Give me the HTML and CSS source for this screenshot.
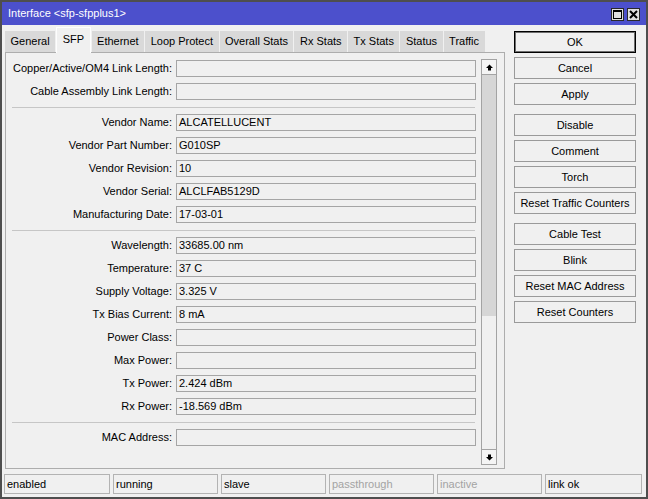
FILE: index.html
```html
<!DOCTYPE html>
<html>
<head>
<meta charset="utf-8">
<link rel="stylesheet" href="styles.css">
</head>
<body>
<div class="window">
  <div class="titlebar">
    <span class="title">Interface &lt;sfp-sfpplus1&gt;</span>
    <div class="tb-btns">
      <span class="tb-btn"><svg width="11" height="11" viewBox="0 0 11 11"><rect x="1.5" y="1.5" width="8" height="8" fill="none" stroke="#000" stroke-width="1"/><rect x="1" y="1" width="9" height="2" fill="#000"/></svg></span>
      <span class="tb-btn"><svg width="11" height="11" viewBox="0 0 11 11"><path d="M2 2 L9 9 M9 2 L2 9" stroke="#000" stroke-width="2" fill="none"/></svg></span>
    </div>
  </div>
  <div class="main">
    <div class="left">
      <div class="tabs">
        <span class="tab">General</span>
        <span class="tab active">SFP</span>
        <span class="tab">Ethernet</span>
        <span class="tab">Loop Protect</span>
        <span class="tab">Overall Stats</span>
        <span class="tab">Rx Stats</span>
        <span class="tab">Tx Stats</span>
        <span class="tab">Status</span>
        <span class="tab">Traffic</span>
      </div>
      <div class="panel">
        <div class="form">
          <span class="label">Copper/Active/OM4 Link Length:</span><span class="field"></span>
          <span class="label">Cable Assembly Link Length:</span><span class="field"></span>
          <span class="sep"></span>
          <span class="label">Vendor Name:</span><span class="field">ALCATELLUCENT</span>
          <span class="label">Vendor Part Number:</span><span class="field">G010SP</span>
          <span class="label">Vendor Revision:</span><span class="field">10</span>
          <span class="label">Vendor Serial:</span><span class="field">ALCLFAB5129D</span>
          <span class="label">Manufacturing Date:</span><span class="field">17-03-01</span>
          <span class="sep"></span>
          <span class="label">Wavelength:</span><span class="field">33685.00 nm</span>
          <span class="label">Temperature:</span><span class="field">37 C</span>
          <span class="label">Supply Voltage:</span><span class="field">3.325 V</span>
          <span class="label">Tx Bias Current:</span><span class="field">8 mA</span>
          <span class="label">Power Class:</span><span class="field"></span>
          <span class="label">Max Power:</span><span class="field"></span>
          <span class="label">Tx Power:</span><span class="field">2.424 dBm</span>
          <span class="label">Rx Power:</span><span class="field">-18.569 dBm</span>
          <span class="sep"></span>
          <span class="label">MAC Address:</span><span class="field"></span>
        </div>
        <div class="scroll">
          <span class="sb-btn"><svg width="7" height="7" viewBox="0 0 7 7"><path d="M0 4 L3.5 0.5 L7 4 Z M2 4 H5 V6.5 H2 Z" fill="#000"/></svg></span>
          <div class="sb-track"><div class="sb-thumb"></div></div>
          <span class="sb-btn"><svg width="7" height="7" viewBox="0 0 7 7"><path d="M0 3 L3.5 6.5 L7 3 Z M2 3 H5 V0.5 H2 Z" fill="#000"/></svg></span>
        </div>
      </div>
    </div>
    <div class="buttons">
      <span class="btn default">OK</span>
      <span class="btn">Cancel</span>
      <span class="btn">Apply</span>
      <span class="btn group">Disable</span>
      <span class="btn">Comment</span>
      <span class="btn">Torch</span>
      <span class="btn">Reset Traffic Counters</span>
      <span class="btn group">Cable Test</span>
      <span class="btn">Blink</span>
      <span class="btn">Reset MAC Address</span>
      <span class="btn">Reset Counters</span>
    </div>
  </div>
  <div class="status">
    <span class="cell c1">enabled</span>
    <span class="cell">running</span>
    <span class="cell">slave</span>
    <span class="cell dim">passthrough</span>
    <span class="cell dim">inactive</span>
    <span class="cell c6">link ok</span>
  </div>
</div>
</body>
</html>
```
FILE: styles.css
```css
body {
  margin: 0;
  font-family: "Liberation Sans", Arial, sans-serif;
  font-size: 11px;
  color: #000;
}

.window {
  width: 648px;
  height: 499px;
  box-sizing: border-box;
  border: 2px solid #4e4e4e;
  background: #f0f0f0;
  display: flex;
  flex-direction: column;
}

.titlebar {
  height: 23px;
  flex: none;
  background: #4c50cc;
  color: #fff;
  display: flex;
  align-items: center;
  justify-content: space-between;
  padding: 0 6px;
}

.title {
  line-height: 23px;
}

.tb-btns {
  display: flex;
  gap: 3px;
  margin-top: 2px;
}

.tb-btn {
  width: 13px;
  height: 13px;
  box-sizing: border-box;
  border: 1px solid #2a2a2a;
  background: #e0e0e0;
  display: flex;
  align-items: center;
  justify-content: center;
}

.main {
  display: flex;
  margin: 2px 0 0 3px;
  height: 442px;
  flex: none;
}

.left {
  width: 500px;
  display: flex;
  flex-direction: column;
}

.tabs {
  display: flex;
  align-items: flex-end;
  height: 25px;
  gap: 1px;
  position: relative;
  z-index: 1;
}

.tab {
  height: 21px;
  box-sizing: border-box;
  padding: 0 5.5px;
  background: #d9d9d9;
  line-height: 21px;
  white-space: nowrap;
}

.tab.active {
  height: 26px;
  margin-bottom: -1px;
  background: #f0f0f0;
  border: 1px solid #fdfdfd;
  border-bottom: none;
  padding: 0 5.5px;
  line-height: 22px;
}

.panel {
  height: 417px;
  box-sizing: border-box;
  border: 1px solid #adadad;
  display: flex;
  padding: 6px 7px 3px 0;
}

.form {
  width: 470px;
  display: grid;
  grid-template-columns: 166px 300px;
  column-gap: 4px;
  row-gap: 6px;
  align-content: start;
  margin-top: 1px;
}

.label {
  text-align: right;
  line-height: 17px;
  white-space: nowrap;
}

.field {
  height: 17px;
  box-sizing: border-box;
  border: 1px solid #a5a5a5;
  padding-left: 2px;
  line-height: 15px;
  white-space: nowrap;
}

.sep {
  grid-column: 1 / -1;
  height: 0;
  border-top: 1px solid #c6c6c6;
  margin: 1px 1px 0 6px;
}

.scroll {
  width: 16px;
  margin-left: 5px;
  display: flex;
  flex-direction: column;
}

.sb-btn {
  height: 16px;
  flex: none;
  box-sizing: border-box;
  border: 1px solid #a3a3a3;
  background: #f4f4f4;
  display: flex;
  align-items: center;
  justify-content: center;
}

.sb-track {
  flex: 1;
  border-left: 1px solid #a3a3a3;
  border-right: 1px solid #a3a3a3;
  background: #f0f0f0;
}

.sb-thumb {
  height: 241px;
  background: #d6d6d6;
}

.buttons {
  margin-left: 9px;
  width: 122px;
  display: flex;
  flex-direction: column;
  gap: 4px;
  padding-top: 4px;
}

.btn {
  height: 22px;
  flex: none;
  box-sizing: border-box;
  border: 1px solid #9a9a9a;
  background: #f0f0f0;
  display: flex;
  align-items: center;
  justify-content: center;
  white-space: nowrap;
}

.btn.default {
  border: 1px solid #000;
  box-shadow: inset 0 0 0 1px #6e6e6e;
}

.btn.group {
  margin-top: 5px;
}

.status {
  display: flex;
  gap: 3px;
  margin: 5px 0 0 2px;
  height: 20px;
  flex: none;
}

.cell {
  width: 105px;
  box-sizing: border-box;
  border: 1px solid #b3b3b3;
  padding-left: 2px;
  line-height: 19px;
  white-space: nowrap;
}

.cell.c1 {
  width: 106px;
}

.cell.c6 {
  width: 97px;
}

.cell.dim {
  color: #a3a3a3;
}
```
